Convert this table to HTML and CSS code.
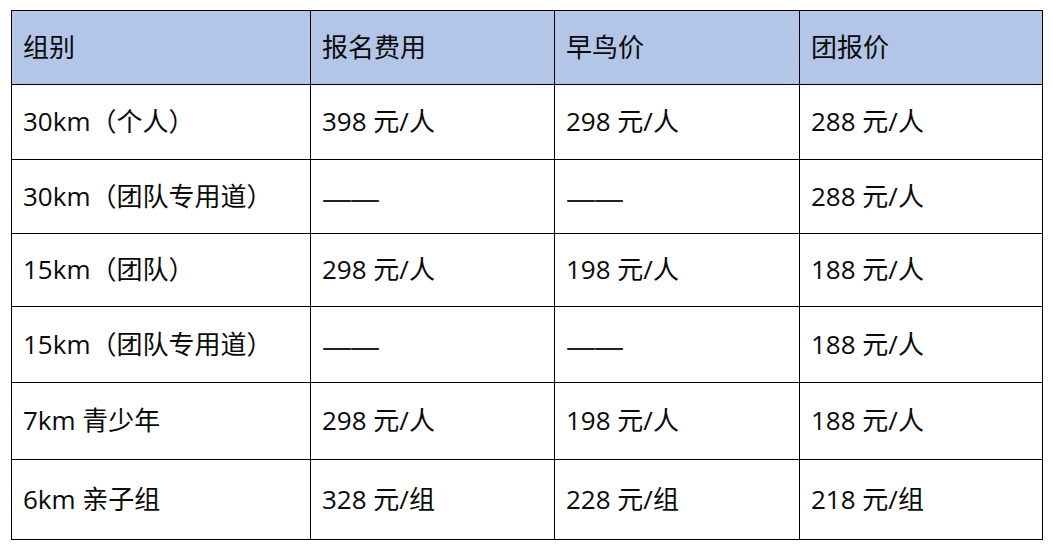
FILE: index.html
```html
<!DOCTYPE html>
<html lang="zh-CN">
<head>
<meta charset="utf-8">
<link rel="stylesheet" href="styles.css">
</head>
<body>
<table class="fees">
  <colgroup>
    <col class="c1"><col class="c2"><col class="c3"><col class="c4">
  </colgroup>
  <thead>
    <tr class="r0"><th>组别</th><th>报名费用</th><th>早鸟价</th><th>团报价</th></tr>
  </thead>
  <tbody>
    <tr class="r1"><td>30km（个人）</td><td>398 元/人</td><td>298 元/人</td><td>288 元/人</td></tr>
    <tr class="r2"><td>30km（团队专用道）</td><td><span class="dash">——</span></td><td><span class="dash">——</span></td><td>288 元/人</td></tr>
    <tr class="r3"><td>15km（团队）</td><td>298 元/人</td><td>198 元/人</td><td>188 元/人</td></tr>
    <tr class="r4"><td>15km（团队专用道）</td><td><span class="dash">——</span></td><td><span class="dash">——</span></td><td>188 元/人</td></tr>
    <tr class="r5"><td>7km 青少年</td><td>298 元/人</td><td>198 元/人</td><td>188 元/人</td></tr>
    <tr class="r6"><td>6km 亲子组</td><td>328 元/组</td><td>228 元/组</td><td>218 元/组</td></tr>
  </tbody>
</table>
</body>
</html>
```

FILE: styles.css
```css
html, body {
  margin: 0;
  padding: 0;
  background: #ffffff;
}
body {
  padding: 10px 0 0 11px;
  font-family: "Open Sans", "Noto Sans CJK SC", sans-serif;
  color: #000000;
}
.fees {
  border-collapse: collapse;
  table-layout: fixed;
  width: 1031px;
  font-size: 26px;
}
.c1 { width: 299px; }
.c2 { width: 244px; }
.c3 { width: 245px; }
.c4 { width: 243px; }
.fees th, .fees td {
  border: 1px solid #000000;
  padding: 0 0 2px 11px;
  text-align: left;
  vertical-align: middle;
  font-weight: 400;
  white-space: nowrap;
  line-height: 1;
  color: #0a0a0a;
}
.fees thead th {
  background: #b4c6e7;
}
.r0 { height: 74px; }
.r1 { height: 75px; }
.r2 { height: 74px; }
.r3 { height: 73px; }
.r4 { height: 76px; }
.r5 { height: 77px; }
.r6 { height: 80px; }
.dash {
  display: inline-block;
  font-size: 30px;
  letter-spacing: -2px;
  color: #222222;
  position: relative;
  top: 2px;
}
```
